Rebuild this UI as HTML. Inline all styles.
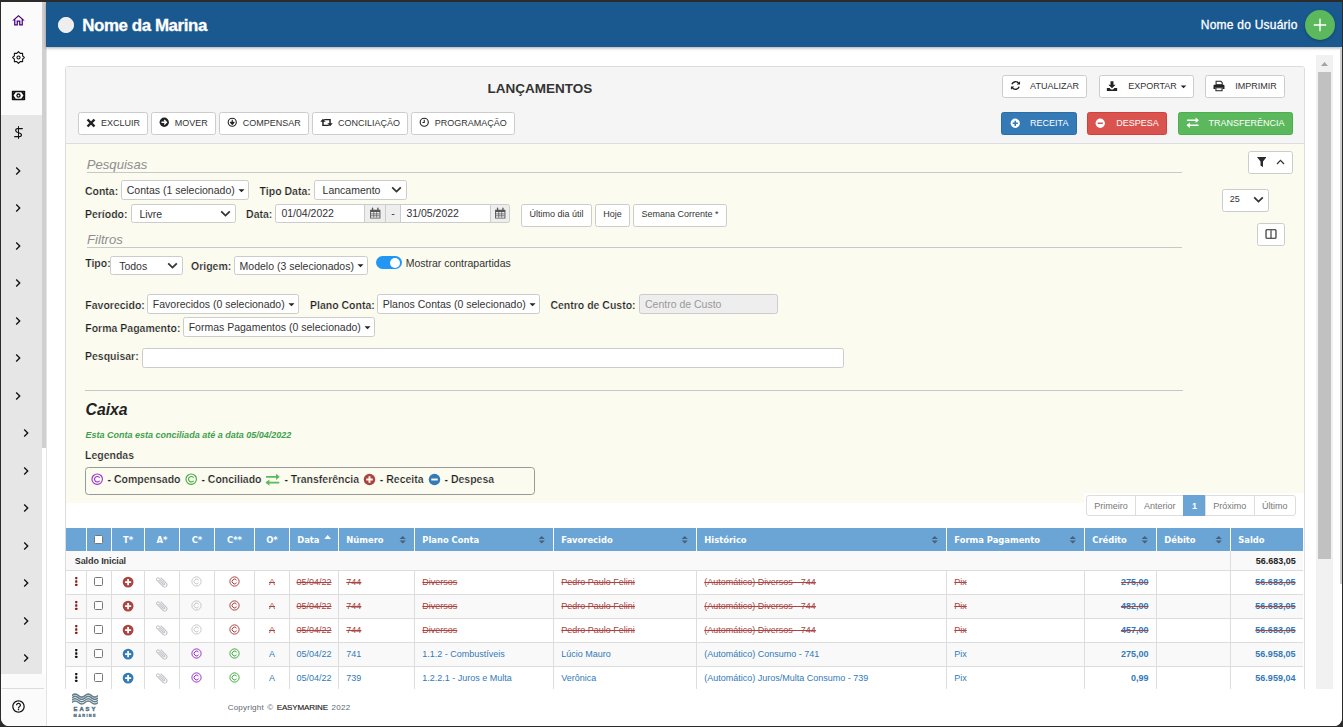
<!DOCTYPE html>
<html lang="pt-BR">
<head>
<meta charset="utf-8">
<title>Lançamentos</title>
<style>
html,body{margin:0;padding:0}
body{width:1343px;height:727px;overflow:hidden;background:#2b2b2b;font-family:"Liberation Sans",Arial,sans-serif;font-size:10.5px;color:#333;position:relative}
.a{position:absolute;box-sizing:border-box}
.t{white-space:nowrap}
.ic{display:block;flex:none}
.win{position:absolute;left:1px;top:2px;width:1341px;height:724px;background:#fff;overflow:hidden;border-radius:0 0 8px 8px}
.pg{position:absolute;left:-1px;top:-2px;width:1343px;height:727px}
b,.b{font-weight:bold}
.btn{display:flex;align-items:center;justify-content:center;border:1px solid #ccc;border-radius:2.5px;background:#fff;color:#333;font-size:9px;white-space:nowrap}
.btn .ic{margin-right:5px}
.btn.w{color:#fff}
.dd{padding-left:1.5px;display:flex;align-items:center;justify-content:center;border:1px solid #ccc;border-radius:2.5px;background:#fff;color:#333;font-size:10.5px;white-space:nowrap}
.sel{display:flex;align-items:center;border:1px solid #ccc;border-radius:2.5px;background:#fff;color:#333;font-size:10.5px;white-space:nowrap}
.inp{border:1px solid #ccc;background:#fff;color:#333;font-size:10.5px;white-space:nowrap;display:flex;align-items:center}
.lab{font-weight:bold;color:#1c1c1c;margin-left:-.6px;-webkit-text-stroke:.22px #fbfbf0}
.sec{font-style:italic;color:#8e8e8e;font-size:13.1px}
.hr{height:1px;background:#c8c8c8}
th,td{padding:0}
</style>
</head>
<body>
<div class="win"><div class="pg">

<!-- sidebar -->
<div class="a " style="left:1px;top:2px;width:45px;height:724px;background:#fbfbfb"></div>
<div class="a " style="left:1px;top:114.5px;width:41px;height:559.1px;background:#e6e6e6"></div>
<div class="a " style="left:42px;top:2px;width:4px;height:446px;background:#d0d0d0"></div>
<div class="a " style="left:42px;top:448px;width:4px;height:226px;background:#fff"></div>
<div class="a " style="left:46px;top:47px;width:1px;height:679px;background:#e4e4e4"></div>
<div class="a " style="left:2px;top:688px;width:42px;height:1px;background:#dcdcdc"></div>
<div class="a " style="left:10.8px;top:13.25px;width:15.0px;height:15.0px;"><svg class="ic" viewBox="0 0 24 24" width="15" height="15" fill="#4b0082"><path d="M12 5.69l5 4.5V18h-2v-6H9v6H7v-7.81l5-4.5M12 3L2 12h3v8h6v-6h2v6h6v-8h3L12 3z"/></svg></div>
<div class="a " style="left:10.95px;top:50.1px;width:15.0px;height:15.0px;"><svg class="ic" viewBox="0 0 24 24" width="15" height="15" fill="#111"><path d="M12.00 2.70L14.74 5.39L18.58 5.42L18.61 9.26L21.30 12.00L18.61 14.74L18.58 18.58L14.74 18.61L12.00 21.30L9.26 18.61L5.42 18.58L5.39 14.74L2.70 12.00L5.39 9.26L5.42 5.42L9.26 5.39z" fill="none" stroke="#111" stroke-width="1.750" stroke-linejoin="round"/><circle cx="12" cy="12" r="2.500" fill="none" stroke="#111" stroke-width="1.700"/></svg></div>
<div class="a " style="left:10.6px;top:88.3px;width:15.0px;height:15.0px;"><svg class="ic" viewBox="0 0 24 24" width="15" height="15" fill="#111"><rect x="1.300" y="4.500" width="21.400" height="15" rx="1.200"/><path d="M4.100 12L7.600 6.700h8.800L19.900 12l-3.500 5.300H7.600z" fill="#fff"/><circle cx="12" cy="12" r="3.500"/><circle cx="12" cy="12" r="1.400" fill="#fff"/><circle cx="4.300" cy="7.300" r=".7" fill="#7a8a9a"/><circle cx="19.700" cy="7.300" r=".7" fill="#7a8a9a"/><circle cx="4.300" cy="16.700" r=".7" fill="#7a8a9a"/><circle cx="19.700" cy="16.700" r=".7" fill="#7a8a9a"/></svg></div>
<div class="a " style="left:10.85px;top:125.1px;width:15.0px;height:15.0px;"><svg class="ic" viewBox="0 0 24 24" width="15" height="15" fill="#111"><path d="M18.800 5.700H10.400C7.300 5.700 6.300 9.700 9.300 11.100L15 13.500c2.900 1.300 1.900 5.100-1.200 5.100H5.200" fill="none" stroke="#111" stroke-width="1.950"/><path d="M12 1.800v20.400" stroke="#111" stroke-width="1.550"/></svg></div>
<div class="a " style="left:10.4px;top:162.55px;width:16.0px;height:16.0px;"><svg class="ic" viewBox="0 0 24 24" width="16" height="16" fill="#111"><path d="M10 6L8.590 7.410 13.170 12l-4.580 4.590L10 18l6-6z"/></svg></div>
<div class="a " style="left:10.4px;top:200.05px;width:16.0px;height:16.0px;"><svg class="ic" viewBox="0 0 24 24" width="16" height="16" fill="#111"><path d="M10 6L8.590 7.410 13.170 12l-4.580 4.590L10 18l6-6z"/></svg></div>
<div class="a " style="left:10.4px;top:237.55px;width:16.0px;height:16.0px;"><svg class="ic" viewBox="0 0 24 24" width="16" height="16" fill="#111"><path d="M10 6L8.590 7.410 13.170 12l-4.580 4.590L10 18l6-6z"/></svg></div>
<div class="a " style="left:10.4px;top:275.05px;width:16.0px;height:16.0px;"><svg class="ic" viewBox="0 0 24 24" width="16" height="16" fill="#111"><path d="M10 6L8.590 7.410 13.170 12l-4.580 4.590L10 18l6-6z"/></svg></div>
<div class="a " style="left:10.4px;top:312.55px;width:16.0px;height:16.0px;"><svg class="ic" viewBox="0 0 24 24" width="16" height="16" fill="#111"><path d="M10 6L8.590 7.410 13.170 12l-4.580 4.590L10 18l6-6z"/></svg></div>
<div class="a " style="left:10.4px;top:350.05px;width:16.0px;height:16.0px;"><svg class="ic" viewBox="0 0 24 24" width="16" height="16" fill="#111"><path d="M10 6L8.590 7.410 13.170 12l-4.580 4.590L10 18l6-6z"/></svg></div>
<div class="a " style="left:10.4px;top:387.55px;width:16.0px;height:16.0px;"><svg class="ic" viewBox="0 0 24 24" width="16" height="16" fill="#111"><path d="M10 6L8.590 7.410 13.170 12l-4.580 4.590L10 18l6-6z"/></svg></div>
<div class="a " style="left:17.9px;top:425.05px;width:16.0px;height:16.0px;"><svg class="ic" viewBox="0 0 24 24" width="16" height="16" fill="#111"><path d="M10 6L8.590 7.410 13.170 12l-4.580 4.590L10 18l6-6z"/></svg></div>
<div class="a " style="left:17.9px;top:462.55px;width:16.0px;height:16.0px;"><svg class="ic" viewBox="0 0 24 24" width="16" height="16" fill="#111"><path d="M10 6L8.590 7.410 13.170 12l-4.580 4.590L10 18l6-6z"/></svg></div>
<div class="a " style="left:17.9px;top:500.05px;width:16.0px;height:16.0px;"><svg class="ic" viewBox="0 0 24 24" width="16" height="16" fill="#111"><path d="M10 6L8.590 7.410 13.170 12l-4.580 4.590L10 18l6-6z"/></svg></div>
<div class="a " style="left:17.9px;top:537.55px;width:16.0px;height:16.0px;"><svg class="ic" viewBox="0 0 24 24" width="16" height="16" fill="#111"><path d="M10 6L8.590 7.410 13.170 12l-4.580 4.590L10 18l6-6z"/></svg></div>
<div class="a " style="left:17.9px;top:575.05px;width:16.0px;height:16.0px;"><svg class="ic" viewBox="0 0 24 24" width="16" height="16" fill="#111"><path d="M10 6L8.590 7.410 13.170 12l-4.580 4.590L10 18l6-6z"/></svg></div>
<div class="a " style="left:17.9px;top:612.55px;width:16.0px;height:16.0px;"><svg class="ic" viewBox="0 0 24 24" width="16" height="16" fill="#111"><path d="M10 6L8.590 7.410 13.170 12l-4.580 4.590L10 18l6-6z"/></svg></div>
<div class="a " style="left:17.9px;top:650.05px;width:16.0px;height:16.0px;"><svg class="ic" viewBox="0 0 24 24" width="16" height="16" fill="#111"><path d="M10 6L8.590 7.410 13.170 12l-4.580 4.590L10 18l6-6z"/></svg></div>
<div class="a " style="left:10.5px;top:699.0px;width:15.0px;height:15.0px;"><svg class="ic" viewBox="0 0 24 24" width="15" height="15" fill="#111"><path d="M11 18h2v-2h-2v2zm1-16C6.480 2 2 6.480 2 12s4.480 10 10 10 10-4.480 10-10S17.520 2 12 2zm0 18c-4.410 0-8-3.590-8-8s3.590-8 8-8 8 3.590 8 8-3.590 8-8 8zm0-14c-2.210 0-4 1.790-4 4h2c0-1.100.9-2 2-2s2 .9 2 2c0 2-3 1.750-3 5h2c0-2.250 3-2.500 3-5 0-2.210-1.790-4-4-4z"/></svg></div>
<!-- top bar -->
<div class="a " style="left:46px;top:2px;width:1296px;height:45px;background:#1a5990;box-shadow:0 1px 3px rgba(0,0,0,.35)"></div>
<div class="a " style="left:58.2px;top:17px;width:15.6px;height:15.6px;background:#eee;border:1.500px solid #fff;border-radius:50%"></div>
<div class="a t b" style="left:82.3px;top:15.7px;line-height:20px;color:#fff;font-size:16.9px;letter-spacing:-.42px;-webkit-text-stroke:.3px #fff">Nome da Marina</div>
<div class="a t " style="left:1200.8px;top:16.6px;line-height:16px;color:#fff;font-size:12px;letter-spacing:.23px;-webkit-text-stroke:.3px #fff">Nome do Usuário</div>
<div class="a " style="left:1305px;top:10px;width:30px;height:30px;background:#5cb85c;border-radius:50%;box-shadow:0 1px 3px rgba(0,0,0,.3)"><svg class="ic" viewBox="0 0 30 30" width="30" height="30"><path d="M15 8.800v12.400M8.800 15h12.400" stroke="#fff" stroke-width="1.400"/></svg></div>
<!-- scrollbars -->
<div class="a " style="left:1316px;top:55px;width:17px;height:634px;background:#f1f1f1"></div>
<div class="a " style="left:1318px;top:72px;width:13px;height:487px;background:#c1c1c1"></div>
<div class="a " style="left:1316px;top:55px;width:17px;height:17px;"><svg class="ic" viewBox="0 0 17 17" width="17" height="17"><path d="M5 11l3.500-4 3.500 4z" fill="#a3a3a3"/></svg></div>
<div class="a " style="left:1340px;top:47px;width:2px;height:537px;background:#cfcfcf"></div>
<!-- panel -->
<div class="a " style="left:65px;top:66px;width:1240px;height:694px;border:1px solid #ddd;border-radius:3px;background:#fff"></div>
<div class="a " style="left:66px;top:67px;width:1238px;height:76px;background:#f5f5f5;border-radius:2px 2px 0 0"></div>
<div class="a " style="left:66px;top:143px;width:1238px;height:1px;background:#ddd"></div>
<div class="a " style="left:66px;top:144px;width:1238px;height:358.5px;background:#fbfbf0"></div>
<div class="a " style="left:1084px;top:492.5px;width:220px;height:10.5px;background:#fff"></div>
<div class="a t b" style="left:487.5px;top:79.7px;line-height:18px;font-size:13.5px;color:#333">LANÇAMENTOS</div>
<div class="a btn " style="left:78px;top:112px;width:70px;height:23px;padding-bottom:2px;"><svg class="ic" viewBox="0 0 14 14" width="10" height="10"><path d="M3.300 3.300L10.700 10.700M10.700 3.300L3.300 10.700" stroke="#222" stroke-width="3.300" stroke-linecap="square" fill="none"/></svg><span>EXCLUIR</span></div>
<div class="a btn " style="left:151px;top:112px;width:65px;height:23px;padding-bottom:2px;"><svg class="ic" viewBox="0 0 14 14" width="10.5" height="10.5"><circle cx="7" cy="7" r="6.200" fill="#222"/><path d="M3.300 7h6.200M6.900 3.900L10 7 6.900 10.100" stroke="#fff" stroke-width="1.700" fill="none" stroke-linejoin="miter"/></svg><span>MOVER</span></div>
<div class="a btn " style="left:219px;top:112px;width:90px;height:23px;padding-bottom:2px;"><svg class="ic" viewBox="0 0 14 14" width="10.5" height="10.5"><circle cx="7" cy="7" r="5.400" fill="none" stroke="#222" stroke-width="1.500"/><path d="M7 3.800v4.400M4.600 7.200L7 9.900 9.400 7.200z" stroke="#222" stroke-width="1.500" fill="#222" stroke-linejoin="round"/></svg><span>COMPENSAR</span></div>
<div class="a btn " style="left:312px;top:112px;width:96px;height:23px;padding-bottom:2px;"><svg class="ic" viewBox="0 0 14 14" width="13" height="13"><g transform="translate(.5 2.900)"><path d="M2.700 0L5.600 3.300H3.500V6.500H8.300L9.600 8H1.900V3.300H-.2z" fill="#222"/><path d="M10.300 8.200L7.400 4.900H9.500V1.700H4.700L3.400 .2H11.100V4.900H13.200z" fill="#222"/></g></svg><span>CONCILIAÇÃO</span></div>
<div class="a btn " style="left:411px;top:112px;width:104px;height:23px;padding-bottom:2px;"><svg class="ic" viewBox="0 0 14 14" width="10.5" height="10.5"><circle cx="7" cy="7" r="5.400" fill="none" stroke="#222" stroke-width="1.500"/><path d="M7 3.800V7.400H4.600" stroke="#222" stroke-width="1.400" fill="none"/></svg><span>PROGRAMAÇÃO</span></div>
<div class="a btn " style="left:1002px;top:75px;width:85px;height:23px;padding-bottom:1.5px;"><svg class="ic" style="margin-right:9px" viewBox="0 0 14 14" width="11" height="11"><path d="M11.600 8.600A4.900 4.900 0 0 1 2.900 9.700M2.400 5.400A4.900 4.900 0 0 1 11.100 4.300" stroke="#222" stroke-width="1.800" fill="none"/><path d="M12.800 1.600v4.200H8.600zM1.200 12.400V8.200h4.200z" fill="#222"/></svg><span>ATUALIZAR</span></div>
<div class="a btn " style="left:1099px;top:75px;width:95px;height:23px;padding-bottom:1.5px;"><svg class="ic" style="margin-right:10.5px" viewBox="0 0 14 14" width="12" height="12"><path d="M5.300 1.500h3.400v4h2.500L7 9.700 2.800 5.500h2.500z" fill="#222"/><path d="M1 9.400h3.200l1.600 1.600h2.400l1.600-1.600H13v3.400H1z" fill="#222"/></svg><span>EXPORTAR <svg class="ic" style="display:inline-block;margin:0 0 0 1px;vertical-align:-1px" viewBox="0 0 8 8" width="7" height="7"><path d="M.8 2.800h6.400L4 6z" fill="#222"/></svg></span></div>
<div class="a btn " style="left:1205px;top:75px;width:80px;height:23px;padding-bottom:1.5px;"><svg class="ic" style="margin-right:10px" viewBox="0 0 14 14" width="12" height="12"><path d="M3.600 1.500h5.600l1.600 1.600v2.400H3.600z" fill="none" stroke="#222" stroke-width="1.200"/><path d="M1.600 5.600h10.800a1 1 0 0 1 1 1v4h-2.200V8.400H2.800v2.200H.6v-4a1 1 0 0 1 1-1z" fill="#222"/><path d="M3.400 9h7.200v3.600H3.400z" fill="none" stroke="#222" stroke-width="1.200"/></svg><span>IMPRIMIR</span></div>
<div class="a btn w" style="left:1001px;top:112px;width:76px;height:23px;padding-bottom:0.6px;background:#337ab7;border-color:#2e6da4"><svg class="ic" style="margin-right:10px" viewBox="0 0 14 14" width="10.5" height="10.5"><circle cx="7" cy="7" r="6.200" fill="#fff"/><path d="M7 3.500v7M3.500 7h7" stroke="#337ab7" stroke-width="2.100" fill="none"/></svg><span>RECEITA</span></div>
<div class="a btn w" style="left:1087px;top:112px;width:80px;height:23px;padding-bottom:0.6px;background:#d9534f;border-color:#d43f3a"><svg class="ic" style="margin-right:10.5px" viewBox="0 0 14 14" width="10.5" height="10.5"><circle cx="7" cy="7" r="6.200" fill="#fff"/><path d="M3.500 7h7" stroke="#d9534f" stroke-width="2.100" fill="none"/></svg><span>DESPESA</span></div>
<div class="a btn w" style="left:1178px;top:112px;width:115px;height:23px;padding-bottom:0.6px;background:#5cb85c;border-color:#4cae4c"><svg class="ic" style="margin-right:8.5px" viewBox="0 0 14 14" width="13.5" height="13.5"><path d="M1 4.400h9.600M1 9.600h12M3.400 9.600" stroke="#fff" stroke-width="1.600" fill="none"/><path d="M10 1.600l3.400 2.800L10 7.200zM4 6.800L.6 9.600 4 12.400z" fill="#fff"/></svg><span>TRANSFERÊNCIA</span></div>
<!-- filters -->
<div class="a t sec" style="left:86.8px;top:156.8px;line-height:16px;">Pesquisas</div>
<div class="a hr" style="left:87px;top:172px;width:1095px;height:1px;"></div>
<div class="a t sec" style="left:87.1px;top:232.0px;line-height:16px;">Filtros</div>
<div class="a hr" style="left:87px;top:247px;width:1095px;height:1px;"></div>
<div class="a t lab" style="left:85.5px;top:183.6px;line-height:14px;">Conta:</div>
<div class="a dd" style="left:121px;top:180px;width:128px;height:20px;"><span>Contas (1 selecionado)</span><svg class="ic" style="margin-left:3px" viewBox="0 0 8 8" width="7" height="7"><path d="M.6 2.600h6.800L4 6z" fill="#222"/></svg></div>
<div class="a t lab" style="left:260.2px;top:183.6px;line-height:14px;">Tipo Data:</div>
<div class="a sel" style="left:314px;top:180px;width:93px;height:20px;padding:0 3.6px 0px 7.6px;font-size:10.5px"><span style="flex:1">Lancamento</span><svg class="ic" viewBox="0 0 12 8" width="11" height="7.500"><path d="M1.300 1.300L6 6l4.700-4.700" stroke="#333" stroke-width="1.900" fill="none"/></svg></div>
<div class="a t lab" style="left:85.5px;top:206.8px;line-height:14px;">Período:</div>
<div class="a sel" style="left:131px;top:204px;width:105px;height:19px;padding:0 4.4px 0px 7.4px;font-size:10.5px"><span style="flex:1">Livre</span><svg class="ic" viewBox="0 0 12 8" width="11" height="7.500"><path d="M1.300 1.300L6 6l4.700-4.700" stroke="#333" stroke-width="1.900" fill="none"/></svg></div>
<div class="a t lab" style="left:246.7px;top:206.8px;line-height:14px;">Data:</div>
<div class="a inp" style="left:275px;top:204px;width:90px;height:19px;border-radius:2.5px 0 0 2.5px;padding-left:5.400px"><span style="margin-top:-2px">01/04/2022</span></div>
<div class="a inp" style="left:364px;top:204px;width:22px;height:19px;background:#eee;justify-content:center"><svg class="ic" style="margin-top:-1px" viewBox="0 0 14 14" width="12.5" height="12.5"><path d="M1.200 3h11.600v10H1.200z" fill="#555"/><path d="M2.300 5.600h9.400v6.300H2.300z" fill="#eee"/><path d="M5.300 5.600v6.300M8.600 5.600v6.300M2.300 7.700h9.400M2.300 9.800h9.400" stroke="#555" stroke-width=".8"/><path d="M4 1.200v2.600M10 1.200v2.600" stroke="#555" stroke-width="1.500" stroke-linecap="round"/></svg></div>
<div class="a inp" style="left:385px;top:204px;width:16px;height:19px;background:#eee;justify-content:center"><span style="margin-top:-2px">-</span></div>
<div class="a inp" style="left:400px;top:204px;width:91px;height:19px;padding-left:5.400px"><span style="margin-top:-2px">31/05/2022</span></div>
<div class="a inp" style="left:490px;top:204px;width:20px;height:19px;background:#eee;justify-content:center;border-radius:0 2.5px 2.5px 0"><svg class="ic" style="margin-top:-1px" viewBox="0 0 14 14" width="12.5" height="12.5"><path d="M1.200 3h11.600v10H1.200z" fill="#555"/><path d="M2.300 5.600h9.400v6.300H2.300z" fill="#eee"/><path d="M5.300 5.600v6.300M8.600 5.600v6.300M2.300 7.700h9.400M2.300 9.800h9.400" stroke="#555" stroke-width=".8"/><path d="M4 1.200v2.600M10 1.200v2.600" stroke="#555" stroke-width="1.500" stroke-linecap="round"/></svg></div>
<div class="a btn " style="left:521px;top:204px;width:71px;height:23px;padding-bottom:3px;"><span>Último dia útil</span></div>
<div class="a btn " style="left:595px;top:204px;width:35px;height:23px;padding-bottom:3px;"><span>Hoje</span></div>
<div class="a btn " style="left:633px;top:204px;width:94px;height:23px;padding-bottom:3px;"><span>Semana Corrente *</span></div>
<div class="a btn" style="left:1248px;top:151px;width:45px;height:23px;"></div>
<div class="a " style="left:1256.8px;top:156.9px;width:9.5px;height:10.1px;"><svg class="ic" viewBox="0 0 9.500 10.100" width="9.500" height="10.100"><path d="M0 0H9.500L6 4.600V10.100L3.500 8.400V4.600z" fill="#2b2b2b"/></svg></div>
<div class="a " style="left:1276px;top:159.2px;width:9px;height:6.0px;"><svg class="ic" viewBox="0 0 9 6" width="9" height="6"><path d="M1 5L4.500 1.400 8 5" stroke="#333" stroke-width="1.250" fill="none"/></svg></div>
<div class="a sel" style="left:1222px;top:189px;width:47px;height:23px;padding:0 4px 2.4px 6.8px;font-size:9px"><span style="flex:1">25</span><svg class="ic" viewBox="0 0 12 8" width="11" height="7.500"><path d="M1.300 1.300L6 6l4.700-4.700" stroke="#333" stroke-width="1.900" fill="none"/></svg></div>
<div class="a btn" style="left:1257px;top:223px;width:28px;height:23px;padding-bottom:2px"><svg class="ic" style="margin:0" viewBox="0 0 14 14" width="12" height="12"><rect x="1.200" y="2" width="11.600" height="10" rx="1" fill="none" stroke="#222" stroke-width="1.300"/><path d="M7 2.600v9" stroke="#222" stroke-width="1.200"/></svg></div>
<div class="a t lab" style="left:85.8px;top:255.8px;line-height:14px;">Tipo:</div>
<div class="a sel" style="left:110px;top:256px;width:73px;height:19px;padding:0 3.8px 0px 8.2px;font-size:10.5px"><span style="flex:1">Todos</span><svg class="ic" viewBox="0 0 12 8" width="11" height="7.500"><path d="M1.300 1.300L6 6l4.700-4.700" stroke="#333" stroke-width="1.900" fill="none"/></svg></div>
<div class="a t lab" style="left:191.6px;top:259.3px;line-height:14px;">Origem:</div>
<div class="a dd" style="left:234px;top:256px;width:134px;height:19px;"><span>Modelo (3 selecionados)</span><svg class="ic" style="margin-left:3px" viewBox="0 0 8 8" width="7" height="7"><path d="M.6 2.600h6.800L4 6z" fill="#222"/></svg></div>
<div class="a " style="left:375.9px;top:256.3px;width:26.0px;height:12.5px;background:#2196f3;border-radius:7px"><div class="a" style="right:1.500px;top:1.250px;width:10px;height:10px;border-radius:50%;background:#fff"></div></div>
<div class="a t " style="left:405.7px;top:256.2px;line-height:14px;color:#333">Mostrar contrapartidas</div>
<div class="a t lab" style="left:85.9px;top:298.2px;line-height:14px;">Favorecido:</div>
<div class="a dd" style="left:147px;top:294px;width:152px;height:20px;"><span>Favorecidos (0 selecionado)</span><svg class="ic" style="margin-left:3px" viewBox="0 0 8 8" width="7" height="7"><path d="M.6 2.600h6.800L4 6z" fill="#222"/></svg></div>
<div class="a t lab" style="left:310.6px;top:298.2px;line-height:14px;">Plano Conta:</div>
<div class="a dd" style="left:377px;top:294px;width:163px;height:20px;"><span>Planos Contas (0 selecionado)</span><svg class="ic" style="margin-left:3px" viewBox="0 0 8 8" width="7" height="7"><path d="M.6 2.600h6.800L4 6z" fill="#222"/></svg></div>
<div class="a t lab" style="left:551px;top:298.2px;line-height:14px;">Centro de Custo:</div>
<div class="a inp" style="left:639px;top:294px;width:139px;height:20px;background:#eee;color:#999;border-radius:2.5px;padding-left:5px">Centro de Custo</div>
<div class="a t lab" style="left:85.9px;top:321.0px;line-height:14px;">Forma Pagamento:</div>
<div class="a dd" style="left:183px;top:317px;width:192px;height:20px;"><span>Formas Pagamentos (0 selecionado)</span><svg class="ic" style="margin-left:3px" viewBox="0 0 8 8" width="7" height="7"><path d="M.6 2.600h6.800L4 6z" fill="#222"/></svg></div>
<div class="a t lab" style="left:85.6px;top:349.2px;line-height:14px;">Pesquisar:</div>
<div class="a inp" style="left:142px;top:348px;width:702px;height:20px;border-radius:2.5px"></div>
<div class="a hr" style="left:85.4px;top:390px;width:1097.6px;height:1px;"></div>
<div class="a t b" style="left:85.6px;top:399.6px;line-height:20px;font-style:italic;font-size:15.75px;color:#222">Caixa</div>
<div class="a t b" style="left:85.6px;top:428.8px;line-height:12px;font-style:italic;font-size:9px;color:#3fa14c">Esta Conta esta conciliada até a data 05/04/2022</div>
<div class="a t lab" style="left:85.6px;top:448.0px;line-height:14px;">Legendas</div>
<div class="a " style="left:85px;top:467px;width:450px;height:28px;border:1px solid #999;border-radius:3.5px"></div>
<div class="a " style="left:90.9px;top:473.0px;width:12.4px;height:12.4px;"><svg class="ic" viewBox="0 0 14 14" width="12.4" height="12.4"><circle cx="7" cy="7" r="5.900" fill="none" stroke="#9932cc" stroke-width="1.250"/><path d="M9.700 8.700a3.100 3.100 0 1 1 0-3.400" fill="none" stroke="#9932cc" stroke-width="1.250"/></svg></div>
<div class="a t lab" style="left:108.2px;top:472.4px;line-height:14px;">- Compensado</div>
<div class="a " style="left:184.8px;top:473.0px;width:12.4px;height:12.4px;"><svg class="ic" viewBox="0 0 14 14" width="12.4" height="12.4"><circle cx="7" cy="7" r="5.900" fill="none" stroke="#3fab3f" stroke-width="1.250"/><path d="M9.700 8.700a3.100 3.100 0 1 1 0-3.400" fill="none" stroke="#3fab3f" stroke-width="1.250"/></svg></div>
<div class="a t lab" style="left:202px;top:472.4px;line-height:14px;">- Conciliado</div>
<div class="a " style="left:265.2px;top:471.5px;width:15.4px;height:15.4px;"><svg class="ic" viewBox="0 0 14 14" width="15.4" height="15.4"><path d="M1 4.400h9.600M1 9.600h12M3.400 9.600" stroke="#5cb85c" stroke-width="1.600" fill="none"/><path d="M10 1.600l3.400 2.800L10 7.200zM4 6.800L.6 9.600 4 12.400z" fill="#5cb85c"/></svg></div>
<div class="a t lab" style="left:285px;top:472.4px;line-height:14px;">- Transferência</div>
<div class="a " style="left:362.9px;top:472.7px;width:13.0px;height:13.0px;"><svg class="ic" viewBox="0 0 14 14" width="13.0" height="13.0"><circle cx="7" cy="7" r="6.200" fill="#a94442"/><path d="M7 3.500v7M3.500 7h7" stroke="#fbfbf0" stroke-width="2.100" fill="none"/></svg></div>
<div class="a t lab" style="left:380.4px;top:472.4px;line-height:14px;">- Receita</div>
<div class="a " style="left:427.6px;top:472.7px;width:13.0px;height:13.0px;"><svg class="ic" viewBox="0 0 14 14" width="13.0" height="13.0"><circle cx="7" cy="7" r="6.200" fill="#337ab7"/><path d="M3.500 7h7" stroke="#fbfbf0" stroke-width="2.100" fill="none"/></svg></div>
<div class="a t lab" style="left:445.1px;top:472.4px;line-height:14px;">- Despesa</div>
<!-- pagination -->
<div class="a " style="left:1086px;top:495px;width:50.2px;height:21px;display:flex;align-items:center;justify-content:center;font-size:9px;background:#fff;color:#777;border:1px solid #ddd;border-radius:3px 0 0 3px;">Primeiro</div>
<div class="a " style="left:1135.2px;top:495px;width:49.0px;height:21px;display:flex;align-items:center;justify-content:center;font-size:9px;background:#fff;color:#777;border:1px solid #ddd;">Anterior</div>
<div class="a " style="left:1183.2px;top:495px;width:22.6px;height:21px;display:flex;align-items:center;justify-content:center;font-size:9px;background:#6aa5d6;color:#fff;font-weight:bold;border:1px solid #6aa5d6;">1</div>
<div class="a " style="left:1204.8px;top:495px;width:49.8px;height:21px;display:flex;align-items:center;justify-content:center;font-size:9px;background:#fff;color:#777;border:1px solid #ddd;">Próximo</div>
<div class="a " style="left:1253.6px;top:495px;width:42.4px;height:21px;display:flex;align-items:center;justify-content:center;font-size:9px;background:#fff;color:#777;border:1px solid #ddd;border-radius:0 3px 3px 0;">Último</div>
<!-- table -->
<div class="a " style="left:66px;top:528px;width:1237.4px;height:23px;background:#6aa5d6"></div>
<div class="a " style="left:86px;top:528px;width:1px;height:23px;background:#fff"></div>
<div class="a " style="left:111px;top:528px;width:1px;height:23px;background:#fff"></div>
<div class="a " style="left:144px;top:528px;width:1px;height:23px;background:#fff"></div>
<div class="a " style="left:179px;top:528px;width:1px;height:23px;background:#fff"></div>
<div class="a " style="left:214px;top:528px;width:1px;height:23px;background:#fff"></div>
<div class="a " style="left:254px;top:528px;width:1px;height:23px;background:#fff"></div>
<div class="a " style="left:289px;top:528px;width:1px;height:23px;background:#fff"></div>
<div class="a " style="left:338px;top:528px;width:1px;height:23px;background:#fff"></div>
<div class="a " style="left:414px;top:528px;width:1px;height:23px;background:#fff"></div>
<div class="a " style="left:553px;top:528px;width:1px;height:23px;background:#fff"></div>
<div class="a " style="left:696px;top:528px;width:1px;height:23px;background:#fff"></div>
<div class="a " style="left:946px;top:528px;width:1px;height:23px;background:#fff"></div>
<div class="a " style="left:1084px;top:528px;width:1px;height:23px;background:#fff"></div>
<div class="a " style="left:1156px;top:528px;width:1px;height:23px;background:#fff"></div>
<div class="a " style="left:1230px;top:528px;width:1px;height:23px;background:#fff"></div>
<div class="a " style="left:94px;top:534.5px;width:9px;height:9.0px;background:#fff;border:1px solid #767676;border-radius:1.500px"></div>
<div class="a t b" style="left:112px;width:32px;top:533px;line-height:14px;text-align:center;color:#fff;font-family:'DejaVu Sans Condensed','Liberation Sans',sans-serif;font-size:9.3px">T*</div>
<div class="a t b" style="left:145px;width:34px;top:533px;line-height:14px;text-align:center;color:#fff;font-family:'DejaVu Sans Condensed','Liberation Sans',sans-serif;font-size:9.3px">A*</div>
<div class="a t b" style="left:180px;width:34px;top:533px;line-height:14px;text-align:center;color:#fff;font-family:'DejaVu Sans Condensed','Liberation Sans',sans-serif;font-size:9.3px">C*</div>
<div class="a t b" style="left:215px;width:39px;top:533px;line-height:14px;text-align:center;color:#fff;font-family:'DejaVu Sans Condensed','Liberation Sans',sans-serif;font-size:9.3px">C**</div>
<div class="a t b" style="left:255px;width:34px;top:533px;line-height:14px;text-align:center;color:#fff;font-family:'DejaVu Sans Condensed','Liberation Sans',sans-serif;font-size:9.3px">O*</div>
<div class="a t b" style="left:297.2px;top:533.0px;line-height:14px;color:#fff;font-family:'DejaVu Sans Condensed','Liberation Sans',sans-serif;font-size:9.3px">Data</div>
<div class="a " style="left:324px;top:534.8px;width:7.4px;height:4.4px;"><svg class="ic" viewBox="0 0 7.4 4.4" width="7.400" height="4.400"><path d="M0 4.400L3.700 0l3.700 4.400z" fill="#fff"/></svg></div>
<div class="a t b" style="left:346.3px;top:533.0px;line-height:14px;color:#fff;font-family:'DejaVu Sans Condensed','Liberation Sans',sans-serif;font-size:9.3px">Número</div>
<div class="a " style="left:397.3px;top:533.65px;width:11.5px;height:11.5px;"><svg class="ic" viewBox="0 0 14 14" width="11.5" height="11.5"><path d="M3.200 6.100L7 2.400l3.800 3.700zM3.200 7.900L7 11.600l3.800-3.700z" fill="#486078"/></svg></div>
<div class="a t b" style="left:422.3px;top:533.0px;line-height:14px;color:#fff;font-family:'DejaVu Sans Condensed','Liberation Sans',sans-serif;font-size:9.3px">Plano Conta</div>
<div class="a " style="left:536.3px;top:533.65px;width:11.5px;height:11.5px;"><svg class="ic" viewBox="0 0 14 14" width="11.5" height="11.5"><path d="M3.200 6.100L7 2.400l3.800 3.700zM3.200 7.900L7 11.600l3.800-3.700z" fill="#486078"/></svg></div>
<div class="a t b" style="left:561.3px;top:533.0px;line-height:14px;color:#fff;font-family:'DejaVu Sans Condensed','Liberation Sans',sans-serif;font-size:9.3px">Favorecido</div>
<div class="a " style="left:679.3px;top:533.65px;width:11.5px;height:11.5px;"><svg class="ic" viewBox="0 0 14 14" width="11.5" height="11.5"><path d="M3.200 6.100L7 2.400l3.800 3.700zM3.200 7.900L7 11.600l3.800-3.700z" fill="#486078"/></svg></div>
<div class="a t b" style="left:704.3px;top:533.0px;line-height:14px;color:#fff;font-family:'DejaVu Sans Condensed','Liberation Sans',sans-serif;font-size:9.3px">Histórico</div>
<div class="a " style="left:929.3px;top:533.65px;width:11.5px;height:11.5px;"><svg class="ic" viewBox="0 0 14 14" width="11.5" height="11.5"><path d="M3.200 6.100L7 2.400l3.800 3.700zM3.200 7.900L7 11.600l3.800-3.700z" fill="#486078"/></svg></div>
<div class="a t b" style="left:954.3px;top:533.0px;line-height:14px;color:#fff;font-family:'DejaVu Sans Condensed','Liberation Sans',sans-serif;font-size:9.3px">Forma Pagamento</div>
<div class="a " style="left:1067.3px;top:533.65px;width:11.5px;height:11.5px;"><svg class="ic" viewBox="0 0 14 14" width="11.5" height="11.5"><path d="M3.200 6.100L7 2.400l3.800 3.700zM3.200 7.900L7 11.600l3.800-3.700z" fill="#486078"/></svg></div>
<div class="a t b" style="left:1092.3px;top:533.0px;line-height:14px;color:#fff;font-family:'DejaVu Sans Condensed','Liberation Sans',sans-serif;font-size:9.3px">Crédito</div>
<div class="a " style="left:1139.3px;top:533.65px;width:11.5px;height:11.5px;"><svg class="ic" viewBox="0 0 14 14" width="11.5" height="11.5"><path d="M3.200 6.100L7 2.400l3.800 3.700zM3.200 7.900L7 11.600l3.800-3.700z" fill="#486078"/></svg></div>
<div class="a t b" style="left:1164.3px;top:533.0px;line-height:14px;color:#fff;font-family:'DejaVu Sans Condensed','Liberation Sans',sans-serif;font-size:9.3px">Débito</div>
<div class="a " style="left:1213.3px;top:533.65px;width:11.5px;height:11.5px;"><svg class="ic" viewBox="0 0 14 14" width="11.5" height="11.5"><path d="M3.200 6.100L7 2.400l3.800 3.700zM3.200 7.900L7 11.600l3.800-3.700z" fill="#486078"/></svg></div>
<div class="a t b" style="left:1238.3px;top:533.0px;line-height:14px;color:#fff;font-family:'DejaVu Sans Condensed','Liberation Sans',sans-serif;font-size:9.3px">Saldo</div>
<div class="a " style="left:66px;top:551px;width:1237.4px;height:20px;background:#f9f9f9;border-bottom:1px solid #ddd"></div>
<div class="a t b" style="left:74.8px;top:554.8px;line-height:12px;font-size:9px;color:#111;letter-spacing:-.1px;-webkit-text-stroke:.12px #f9f9f9">Saldo Inicial</div>
<div class="a t b" style="left:0px;top:554.8px;line-height:12px;font-size:9px;color:#222;left:auto;right:47.3px">56.683,05</div>
<div class="a " style="left:1230px;top:551px;width:1px;height:19px;background:#ddd"></div>
<div class="a " style="left:66px;top:571px;width:1237.4px;height:24px;background:#fff;border-bottom:1px solid #ddd"></div>
<div class="a " style="left:86px;top:571px;width:1px;height:24px;background:#ddd"></div>
<div class="a " style="left:111px;top:571px;width:1px;height:24px;background:#ddd"></div>
<div class="a " style="left:144px;top:571px;width:1px;height:24px;background:#ddd"></div>
<div class="a " style="left:179px;top:571px;width:1px;height:24px;background:#ddd"></div>
<div class="a " style="left:214px;top:571px;width:1px;height:24px;background:#ddd"></div>
<div class="a " style="left:254px;top:571px;width:1px;height:24px;background:#ddd"></div>
<div class="a " style="left:289px;top:571px;width:1px;height:24px;background:#ddd"></div>
<div class="a " style="left:338px;top:571px;width:1px;height:24px;background:#ddd"></div>
<div class="a " style="left:414px;top:571px;width:1px;height:24px;background:#ddd"></div>
<div class="a " style="left:553px;top:571px;width:1px;height:24px;background:#ddd"></div>
<div class="a " style="left:696px;top:571px;width:1px;height:24px;background:#ddd"></div>
<div class="a " style="left:946px;top:571px;width:1px;height:24px;background:#ddd"></div>
<div class="a " style="left:1084px;top:571px;width:1px;height:24px;background:#ddd"></div>
<div class="a " style="left:1156px;top:571px;width:1px;height:24px;background:#ddd"></div>
<div class="a " style="left:1230px;top:571px;width:1px;height:24px;background:#ddd"></div>
<div class="a " style="left:70.8px;top:576.1px;width:11.0px;height:11.0px;"><svg class="ic" viewBox="0 0 14 14" width="11" height="11"><rect x="5.300" y="1.200" width="2.800" height="2.900" rx=".5" fill="#8b1a1a"/><rect x="5.300" y="5.550" width="2.800" height="2.900" rx=".5" fill="#8b1a1a"/><rect x="5.300" y="9.900" width="2.800" height="2.900" rx=".5" fill="#8b1a1a"/></svg></div>
<div class="a " style="left:94px;top:577.0px;width:9px;height:9.0px;background:#fff;border:1px solid #767676;border-radius:1.500px"></div>
<div class="a " style="left:122.4px;top:575.5px;width:12.2px;height:12.2px;"><svg class="ic" viewBox="0 0 14 14" width="12.2" height="12.2"><circle cx="7" cy="7" r="6.200" fill="#a94442"/><path d="M7 3.500v7M3.500 7h7" stroke="#fff" stroke-width="2.100" fill="none"/></svg></div>
<div class="a " style="left:155.2px;top:574.6px;width:14.0px;height:14.0px;"><svg class="ic" viewBox="0 0 14 14" width="14" height="14"><g transform="translate(6.800 7) rotate(-45)"><path d="M2.300 -3.400V4a2.300 2.300 0 0 1-4.600 0V-4.500a1.550 1.550 0 0 1 3.100 0V3.100a.78.78 0 0 1-1.560 0V-3.400" stroke="#c2c2ca" stroke-width="1.050" fill="none" stroke-linecap="round"/></g></svg></div>
<div class="a " style="left:191.4px;top:575.7px;width:11.0px;height:11.0px;"><svg class="ic" viewBox="0 0 14 14" width="11" height="11"><circle cx="7" cy="7" r="5.900" fill="none" stroke="#c8c8c8" stroke-width="1.250"/><path d="M9.700 8.700a3.100 3.100 0 1 1 0-3.400" fill="none" stroke="#c8c8c8" stroke-width="1.250"/></svg></div>
<div class="a " style="left:228.6px;top:575.7px;width:11.0px;height:11.0px;"><svg class="ic" viewBox="0 0 14 14" width="11" height="11"><circle cx="7" cy="7" r="5.900" fill="none" stroke="#a94442" stroke-width="1.250"/><path d="M9.700 8.700a3.100 3.100 0 1 1 0-3.400" fill="none" stroke="#a94442" stroke-width="1.250"/></svg></div>
<div class="a t" style="left:255px;width:34px;top:575.6px;line-height:12px;text-align:center;font-size:9px;color:#a94442;text-decoration:line-through;">A</div>
<div class="a t " style="left:296.5px;top:575.6px;line-height:12px;font-size:9px;color:#a94442;text-decoration:line-through;">05/04/22</div>
<div class="a t " style="left:346.3px;top:575.6px;line-height:12px;font-size:9px;color:#a94442;text-decoration:line-through;">744</div>
<div class="a t " style="left:422.3px;top:575.6px;line-height:12px;font-size:9px;color:#a94442;text-decoration:line-through;">Diversos</div>
<div class="a t " style="left:561.3px;top:575.6px;line-height:12px;font-size:9px;color:#a94442;text-decoration:line-through;">Pedro Paulo Felini</div>
<div class="a t " style="left:704.3px;top:575.6px;line-height:12px;font-size:9px;color:#a94442;text-decoration:line-through;">(Automático) Diversos - 744</div>
<div class="a t " style="left:954.3px;top:575.6px;line-height:12px;font-size:9px;color:#a94442;text-decoration:line-through;">Pix</div>
<div class="a t b" style="left:0px;top:575.6px;line-height:12px;font-size:9px;color:#a94442;text-decoration:line-through;left:auto;right:194.6px"><span style="color:#337ab7">275,00</span></div>
<div class="a t b" style="left:0px;top:575.6px;line-height:12px;font-size:9px;color:#a94442;text-decoration:line-through;left:auto;right:47.6px"><span style="color:#337ab7">56.683,05</span></div>
<div class="a " style="left:66px;top:595px;width:1237.4px;height:24px;background:#f9f9f9;border-bottom:1px solid #ddd"></div>
<div class="a " style="left:86px;top:595px;width:1px;height:24px;background:#ddd"></div>
<div class="a " style="left:111px;top:595px;width:1px;height:24px;background:#ddd"></div>
<div class="a " style="left:144px;top:595px;width:1px;height:24px;background:#ddd"></div>
<div class="a " style="left:179px;top:595px;width:1px;height:24px;background:#ddd"></div>
<div class="a " style="left:214px;top:595px;width:1px;height:24px;background:#ddd"></div>
<div class="a " style="left:254px;top:595px;width:1px;height:24px;background:#ddd"></div>
<div class="a " style="left:289px;top:595px;width:1px;height:24px;background:#ddd"></div>
<div class="a " style="left:338px;top:595px;width:1px;height:24px;background:#ddd"></div>
<div class="a " style="left:414px;top:595px;width:1px;height:24px;background:#ddd"></div>
<div class="a " style="left:553px;top:595px;width:1px;height:24px;background:#ddd"></div>
<div class="a " style="left:696px;top:595px;width:1px;height:24px;background:#ddd"></div>
<div class="a " style="left:946px;top:595px;width:1px;height:24px;background:#ddd"></div>
<div class="a " style="left:1084px;top:595px;width:1px;height:24px;background:#ddd"></div>
<div class="a " style="left:1156px;top:595px;width:1px;height:24px;background:#ddd"></div>
<div class="a " style="left:1230px;top:595px;width:1px;height:24px;background:#ddd"></div>
<div class="a " style="left:70.8px;top:600.1px;width:11.0px;height:11.0px;"><svg class="ic" viewBox="0 0 14 14" width="11" height="11"><rect x="5.300" y="1.200" width="2.800" height="2.900" rx=".5" fill="#8b1a1a"/><rect x="5.300" y="5.550" width="2.800" height="2.900" rx=".5" fill="#8b1a1a"/><rect x="5.300" y="9.900" width="2.800" height="2.900" rx=".5" fill="#8b1a1a"/></svg></div>
<div class="a " style="left:94px;top:601.0px;width:9px;height:9.0px;background:#fff;border:1px solid #767676;border-radius:1.500px"></div>
<div class="a " style="left:122.4px;top:599.5px;width:12.2px;height:12.2px;"><svg class="ic" viewBox="0 0 14 14" width="12.2" height="12.2"><circle cx="7" cy="7" r="6.200" fill="#a94442"/><path d="M7 3.500v7M3.500 7h7" stroke="#f9f9f9" stroke-width="2.100" fill="none"/></svg></div>
<div class="a " style="left:155.2px;top:598.6px;width:14.0px;height:14.0px;"><svg class="ic" viewBox="0 0 14 14" width="14" height="14"><g transform="translate(6.800 7) rotate(-45)"><path d="M2.300 -3.400V4a2.300 2.300 0 0 1-4.600 0V-4.500a1.550 1.550 0 0 1 3.100 0V3.100a.78.78 0 0 1-1.560 0V-3.400" stroke="#c2c2ca" stroke-width="1.050" fill="none" stroke-linecap="round"/></g></svg></div>
<div class="a " style="left:191.4px;top:599.7px;width:11.0px;height:11.0px;"><svg class="ic" viewBox="0 0 14 14" width="11" height="11"><circle cx="7" cy="7" r="5.900" fill="none" stroke="#c8c8c8" stroke-width="1.250"/><path d="M9.700 8.700a3.100 3.100 0 1 1 0-3.400" fill="none" stroke="#c8c8c8" stroke-width="1.250"/></svg></div>
<div class="a " style="left:228.6px;top:599.7px;width:11.0px;height:11.0px;"><svg class="ic" viewBox="0 0 14 14" width="11" height="11"><circle cx="7" cy="7" r="5.900" fill="none" stroke="#a94442" stroke-width="1.250"/><path d="M9.700 8.700a3.100 3.100 0 1 1 0-3.400" fill="none" stroke="#a94442" stroke-width="1.250"/></svg></div>
<div class="a t" style="left:255px;width:34px;top:599.6px;line-height:12px;text-align:center;font-size:9px;color:#a94442;text-decoration:line-through;">A</div>
<div class="a t " style="left:296.5px;top:599.6px;line-height:12px;font-size:9px;color:#a94442;text-decoration:line-through;">05/04/22</div>
<div class="a t " style="left:346.3px;top:599.6px;line-height:12px;font-size:9px;color:#a94442;text-decoration:line-through;">744</div>
<div class="a t " style="left:422.3px;top:599.6px;line-height:12px;font-size:9px;color:#a94442;text-decoration:line-through;">Diversos</div>
<div class="a t " style="left:561.3px;top:599.6px;line-height:12px;font-size:9px;color:#a94442;text-decoration:line-through;">Pedro Paulo Felini</div>
<div class="a t " style="left:704.3px;top:599.6px;line-height:12px;font-size:9px;color:#a94442;text-decoration:line-through;">(Automático) Diversos - 744</div>
<div class="a t " style="left:954.3px;top:599.6px;line-height:12px;font-size:9px;color:#a94442;text-decoration:line-through;">Pix</div>
<div class="a t b" style="left:0px;top:599.6px;line-height:12px;font-size:9px;color:#a94442;text-decoration:line-through;left:auto;right:194.6px"><span style="color:#337ab7">482,00</span></div>
<div class="a t b" style="left:0px;top:599.6px;line-height:12px;font-size:9px;color:#a94442;text-decoration:line-through;left:auto;right:47.6px"><span style="color:#337ab7">56.683,05</span></div>
<div class="a " style="left:66px;top:619px;width:1237.4px;height:24px;background:#fff;border-bottom:1px solid #ddd"></div>
<div class="a " style="left:86px;top:619px;width:1px;height:24px;background:#ddd"></div>
<div class="a " style="left:111px;top:619px;width:1px;height:24px;background:#ddd"></div>
<div class="a " style="left:144px;top:619px;width:1px;height:24px;background:#ddd"></div>
<div class="a " style="left:179px;top:619px;width:1px;height:24px;background:#ddd"></div>
<div class="a " style="left:214px;top:619px;width:1px;height:24px;background:#ddd"></div>
<div class="a " style="left:254px;top:619px;width:1px;height:24px;background:#ddd"></div>
<div class="a " style="left:289px;top:619px;width:1px;height:24px;background:#ddd"></div>
<div class="a " style="left:338px;top:619px;width:1px;height:24px;background:#ddd"></div>
<div class="a " style="left:414px;top:619px;width:1px;height:24px;background:#ddd"></div>
<div class="a " style="left:553px;top:619px;width:1px;height:24px;background:#ddd"></div>
<div class="a " style="left:696px;top:619px;width:1px;height:24px;background:#ddd"></div>
<div class="a " style="left:946px;top:619px;width:1px;height:24px;background:#ddd"></div>
<div class="a " style="left:1084px;top:619px;width:1px;height:24px;background:#ddd"></div>
<div class="a " style="left:1156px;top:619px;width:1px;height:24px;background:#ddd"></div>
<div class="a " style="left:1230px;top:619px;width:1px;height:24px;background:#ddd"></div>
<div class="a " style="left:70.8px;top:624.1px;width:11.0px;height:11.0px;"><svg class="ic" viewBox="0 0 14 14" width="11" height="11"><rect x="5.300" y="1.200" width="2.800" height="2.900" rx=".5" fill="#8b1a1a"/><rect x="5.300" y="5.550" width="2.800" height="2.900" rx=".5" fill="#8b1a1a"/><rect x="5.300" y="9.900" width="2.800" height="2.900" rx=".5" fill="#8b1a1a"/></svg></div>
<div class="a " style="left:94px;top:625.0px;width:9px;height:9.0px;background:#fff;border:1px solid #767676;border-radius:1.500px"></div>
<div class="a " style="left:122.4px;top:623.5px;width:12.2px;height:12.2px;"><svg class="ic" viewBox="0 0 14 14" width="12.2" height="12.2"><circle cx="7" cy="7" r="6.200" fill="#a94442"/><path d="M7 3.500v7M3.500 7h7" stroke="#fff" stroke-width="2.100" fill="none"/></svg></div>
<div class="a " style="left:155.2px;top:622.6px;width:14.0px;height:14.0px;"><svg class="ic" viewBox="0 0 14 14" width="14" height="14"><g transform="translate(6.800 7) rotate(-45)"><path d="M2.300 -3.400V4a2.300 2.300 0 0 1-4.600 0V-4.500a1.550 1.550 0 0 1 3.100 0V3.100a.78.78 0 0 1-1.560 0V-3.400" stroke="#c2c2ca" stroke-width="1.050" fill="none" stroke-linecap="round"/></g></svg></div>
<div class="a " style="left:191.4px;top:623.7px;width:11.0px;height:11.0px;"><svg class="ic" viewBox="0 0 14 14" width="11" height="11"><circle cx="7" cy="7" r="5.900" fill="none" stroke="#c8c8c8" stroke-width="1.250"/><path d="M9.700 8.700a3.100 3.100 0 1 1 0-3.400" fill="none" stroke="#c8c8c8" stroke-width="1.250"/></svg></div>
<div class="a " style="left:228.6px;top:623.7px;width:11.0px;height:11.0px;"><svg class="ic" viewBox="0 0 14 14" width="11" height="11"><circle cx="7" cy="7" r="5.900" fill="none" stroke="#a94442" stroke-width="1.250"/><path d="M9.700 8.700a3.100 3.100 0 1 1 0-3.400" fill="none" stroke="#a94442" stroke-width="1.250"/></svg></div>
<div class="a t" style="left:255px;width:34px;top:623.6px;line-height:12px;text-align:center;font-size:9px;color:#a94442;text-decoration:line-through;">A</div>
<div class="a t " style="left:296.5px;top:623.6px;line-height:12px;font-size:9px;color:#a94442;text-decoration:line-through;">05/04/22</div>
<div class="a t " style="left:346.3px;top:623.6px;line-height:12px;font-size:9px;color:#a94442;text-decoration:line-through;">744</div>
<div class="a t " style="left:422.3px;top:623.6px;line-height:12px;font-size:9px;color:#a94442;text-decoration:line-through;">Diversos</div>
<div class="a t " style="left:561.3px;top:623.6px;line-height:12px;font-size:9px;color:#a94442;text-decoration:line-through;">Pedro Paulo Felini</div>
<div class="a t " style="left:704.3px;top:623.6px;line-height:12px;font-size:9px;color:#a94442;text-decoration:line-through;">(Automático) Diversos - 744</div>
<div class="a t " style="left:954.3px;top:623.6px;line-height:12px;font-size:9px;color:#a94442;text-decoration:line-through;">Pix</div>
<div class="a t b" style="left:0px;top:623.6px;line-height:12px;font-size:9px;color:#a94442;text-decoration:line-through;left:auto;right:194.6px"><span style="color:#337ab7">457,00</span></div>
<div class="a t b" style="left:0px;top:623.6px;line-height:12px;font-size:9px;color:#a94442;text-decoration:line-through;left:auto;right:47.6px"><span style="color:#337ab7">56.683,05</span></div>
<div class="a " style="left:66px;top:643px;width:1237.4px;height:24px;background:#f9f9f9;border-bottom:1px solid #ddd"></div>
<div class="a " style="left:86px;top:643px;width:1px;height:24px;background:#ddd"></div>
<div class="a " style="left:111px;top:643px;width:1px;height:24px;background:#ddd"></div>
<div class="a " style="left:144px;top:643px;width:1px;height:24px;background:#ddd"></div>
<div class="a " style="left:179px;top:643px;width:1px;height:24px;background:#ddd"></div>
<div class="a " style="left:214px;top:643px;width:1px;height:24px;background:#ddd"></div>
<div class="a " style="left:254px;top:643px;width:1px;height:24px;background:#ddd"></div>
<div class="a " style="left:289px;top:643px;width:1px;height:24px;background:#ddd"></div>
<div class="a " style="left:338px;top:643px;width:1px;height:24px;background:#ddd"></div>
<div class="a " style="left:414px;top:643px;width:1px;height:24px;background:#ddd"></div>
<div class="a " style="left:553px;top:643px;width:1px;height:24px;background:#ddd"></div>
<div class="a " style="left:696px;top:643px;width:1px;height:24px;background:#ddd"></div>
<div class="a " style="left:946px;top:643px;width:1px;height:24px;background:#ddd"></div>
<div class="a " style="left:1084px;top:643px;width:1px;height:24px;background:#ddd"></div>
<div class="a " style="left:1156px;top:643px;width:1px;height:24px;background:#ddd"></div>
<div class="a " style="left:1230px;top:643px;width:1px;height:24px;background:#ddd"></div>
<div class="a " style="left:70.8px;top:648.1px;width:11.0px;height:11.0px;"><svg class="ic" viewBox="0 0 14 14" width="11" height="11"><rect x="5.300" y="1.200" width="2.800" height="2.900" rx=".5" fill="#111"/><rect x="5.300" y="5.550" width="2.800" height="2.900" rx=".5" fill="#111"/><rect x="5.300" y="9.900" width="2.800" height="2.900" rx=".5" fill="#111"/></svg></div>
<div class="a " style="left:94px;top:649.0px;width:9px;height:9.0px;background:#fff;border:1px solid #767676;border-radius:1.500px"></div>
<div class="a " style="left:122.4px;top:647.5px;width:12.2px;height:12.2px;"><svg class="ic" viewBox="0 0 14 14" width="12.2" height="12.2"><circle cx="7" cy="7" r="6.200" fill="#337ab7"/><path d="M7 3.500v7M3.500 7h7" stroke="#f9f9f9" stroke-width="2.100" fill="none"/></svg></div>
<div class="a " style="left:155.2px;top:646.6px;width:14.0px;height:14.0px;"><svg class="ic" viewBox="0 0 14 14" width="14" height="14"><g transform="translate(6.800 7) rotate(-45)"><path d="M2.300 -3.400V4a2.300 2.300 0 0 1-4.600 0V-4.500a1.550 1.550 0 0 1 3.100 0V3.100a.78.78 0 0 1-1.560 0V-3.400" stroke="#c2c2ca" stroke-width="1.050" fill="none" stroke-linecap="round"/></g></svg></div>
<div class="a " style="left:191.4px;top:647.7px;width:11.0px;height:11.0px;"><svg class="ic" viewBox="0 0 14 14" width="11" height="11"><circle cx="7" cy="7" r="5.900" fill="none" stroke="#9932cc" stroke-width="1.250"/><path d="M9.700 8.700a3.100 3.100 0 1 1 0-3.400" fill="none" stroke="#9932cc" stroke-width="1.250"/></svg></div>
<div class="a " style="left:228.6px;top:647.7px;width:11.0px;height:11.0px;"><svg class="ic" viewBox="0 0 14 14" width="11" height="11"><circle cx="7" cy="7" r="5.900" fill="none" stroke="#3fab3f" stroke-width="1.250"/><path d="M9.700 8.700a3.100 3.100 0 1 1 0-3.400" fill="none" stroke="#3fab3f" stroke-width="1.250"/></svg></div>
<div class="a t" style="left:255px;width:34px;top:647.6px;line-height:12px;text-align:center;font-size:9px;color:#337ab7;">A</div>
<div class="a t " style="left:296.5px;top:647.6px;line-height:12px;font-size:9px;color:#337ab7;">05/04/22</div>
<div class="a t " style="left:346.3px;top:647.6px;line-height:12px;font-size:9px;color:#337ab7;">741</div>
<div class="a t " style="left:422.3px;top:647.6px;line-height:12px;font-size:9px;color:#337ab7;">1.1.2 - Combustíveis</div>
<div class="a t " style="left:561.3px;top:647.6px;line-height:12px;font-size:9px;color:#337ab7;">Lúcio Mauro</div>
<div class="a t " style="left:704.3px;top:647.6px;line-height:12px;font-size:9px;color:#337ab7;">(Automático) Consumo - 741</div>
<div class="a t " style="left:954.3px;top:647.6px;line-height:12px;font-size:9px;color:#337ab7;">Pix</div>
<div class="a t b" style="left:0px;top:647.6px;line-height:12px;font-size:9px;color:#337ab7;left:auto;right:194.6px"><span style="color:#337ab7">275,00</span></div>
<div class="a t b" style="left:0px;top:647.6px;line-height:12px;font-size:9px;color:#337ab7;left:auto;right:47.6px"><span style="color:#337ab7">56.958,05</span></div>
<div class="a " style="left:66px;top:667px;width:1237.4px;height:24px;background:#fff;border-bottom:1px solid #ddd"></div>
<div class="a " style="left:86px;top:667px;width:1px;height:24px;background:#ddd"></div>
<div class="a " style="left:111px;top:667px;width:1px;height:24px;background:#ddd"></div>
<div class="a " style="left:144px;top:667px;width:1px;height:24px;background:#ddd"></div>
<div class="a " style="left:179px;top:667px;width:1px;height:24px;background:#ddd"></div>
<div class="a " style="left:214px;top:667px;width:1px;height:24px;background:#ddd"></div>
<div class="a " style="left:254px;top:667px;width:1px;height:24px;background:#ddd"></div>
<div class="a " style="left:289px;top:667px;width:1px;height:24px;background:#ddd"></div>
<div class="a " style="left:338px;top:667px;width:1px;height:24px;background:#ddd"></div>
<div class="a " style="left:414px;top:667px;width:1px;height:24px;background:#ddd"></div>
<div class="a " style="left:553px;top:667px;width:1px;height:24px;background:#ddd"></div>
<div class="a " style="left:696px;top:667px;width:1px;height:24px;background:#ddd"></div>
<div class="a " style="left:946px;top:667px;width:1px;height:24px;background:#ddd"></div>
<div class="a " style="left:1084px;top:667px;width:1px;height:24px;background:#ddd"></div>
<div class="a " style="left:1156px;top:667px;width:1px;height:24px;background:#ddd"></div>
<div class="a " style="left:1230px;top:667px;width:1px;height:24px;background:#ddd"></div>
<div class="a " style="left:70.8px;top:672.1px;width:11.0px;height:11.0px;"><svg class="ic" viewBox="0 0 14 14" width="11" height="11"><rect x="5.300" y="1.200" width="2.800" height="2.900" rx=".5" fill="#111"/><rect x="5.300" y="5.550" width="2.800" height="2.900" rx=".5" fill="#111"/><rect x="5.300" y="9.900" width="2.800" height="2.900" rx=".5" fill="#111"/></svg></div>
<div class="a " style="left:94px;top:673.0px;width:9px;height:9.0px;background:#fff;border:1px solid #767676;border-radius:1.500px"></div>
<div class="a " style="left:122.4px;top:671.5px;width:12.2px;height:12.2px;"><svg class="ic" viewBox="0 0 14 14" width="12.2" height="12.2"><circle cx="7" cy="7" r="6.200" fill="#337ab7"/><path d="M7 3.500v7M3.500 7h7" stroke="#fff" stroke-width="2.100" fill="none"/></svg></div>
<div class="a " style="left:155.2px;top:670.6px;width:14.0px;height:14.0px;"><svg class="ic" viewBox="0 0 14 14" width="14" height="14"><g transform="translate(6.800 7) rotate(-45)"><path d="M2.300 -3.400V4a2.300 2.300 0 0 1-4.600 0V-4.500a1.550 1.550 0 0 1 3.100 0V3.100a.78.78 0 0 1-1.560 0V-3.400" stroke="#c2c2ca" stroke-width="1.050" fill="none" stroke-linecap="round"/></g></svg></div>
<div class="a " style="left:191.4px;top:671.7px;width:11.0px;height:11.0px;"><svg class="ic" viewBox="0 0 14 14" width="11" height="11"><circle cx="7" cy="7" r="5.900" fill="none" stroke="#9932cc" stroke-width="1.250"/><path d="M9.700 8.700a3.100 3.100 0 1 1 0-3.400" fill="none" stroke="#9932cc" stroke-width="1.250"/></svg></div>
<div class="a " style="left:228.6px;top:671.7px;width:11.0px;height:11.0px;"><svg class="ic" viewBox="0 0 14 14" width="11" height="11"><circle cx="7" cy="7" r="5.900" fill="none" stroke="#3fab3f" stroke-width="1.250"/><path d="M9.700 8.700a3.100 3.100 0 1 1 0-3.400" fill="none" stroke="#3fab3f" stroke-width="1.250"/></svg></div>
<div class="a t" style="left:255px;width:34px;top:671.6px;line-height:12px;text-align:center;font-size:9px;color:#337ab7;">A</div>
<div class="a t " style="left:296.5px;top:671.6px;line-height:12px;font-size:9px;color:#337ab7;">05/04/22</div>
<div class="a t " style="left:346.3px;top:671.6px;line-height:12px;font-size:9px;color:#337ab7;">739</div>
<div class="a t " style="left:422.3px;top:671.6px;line-height:12px;font-size:9px;color:#337ab7;">1.2.2.1 - Juros e Multa</div>
<div class="a t " style="left:561.3px;top:671.6px;line-height:12px;font-size:9px;color:#337ab7;">Verônica</div>
<div class="a t " style="left:704.3px;top:671.6px;line-height:12px;font-size:9px;color:#337ab7;">(Automático) Juros/Multa Consumo - 739</div>
<div class="a t " style="left:954.3px;top:671.6px;line-height:12px;font-size:9px;color:#337ab7;">Pix</div>
<div class="a t b" style="left:0px;top:671.6px;line-height:12px;font-size:9px;color:#337ab7;left:auto;right:194.6px"><span style="color:#337ab7">0,99</span></div>
<div class="a t b" style="left:0px;top:671.6px;line-height:12px;font-size:9px;color:#337ab7;left:auto;right:47.6px"><span style="color:#337ab7">56.959,04</span></div>
<!-- footer -->
<div class="a " style="left:47px;top:689px;width:1295px;height:37px;background:#fff"></div>
<div class="a " style="left:65px;top:689px;width:1px;height:0px;background:#ddd"></div>
<div class="a " style="left:71.8px;top:693px;width:26.0px;height:24px;"><svg class="ic" viewBox="0 0 26 24" width="26" height="24">
<g fill="none" stroke="#647f8d" stroke-width="1.500">
<path d="M0 2.600q3.250-3 6.500 0t6.500 0 6.500 0 6.500 0"/>
<path d="M0 4.900q3.250-3 6.500 0t6.500 0 6.500 0 6.500 0"/>
<path d="M0 7.200q3.250-3 6.500 0t6.500 0 6.500 0 6.500 0"/>
<path d="M0 9.500q3.250-3 6.500 0t6.500 0 6.500 0 6.500 0"/>
</g>
<text x="1.600" y="18.200" font-family="Liberation Sans,Arial,sans-serif" font-weight="bold" font-size="5.900" letter-spacing="1.900" fill="#557280" stroke="#557280" stroke-width=".4">EASY</text>
<text x="1.600" y="23.600" font-family="Liberation Sans,Arial,sans-serif" font-weight="bold" font-size="3.900" letter-spacing="1.320" fill="#557280" stroke="#557280" stroke-width=".3">MARINE</text>
</svg></div>
<div class="a t " style="left:227.7px;top:702.4px;line-height:12px;font-size:8px;color:#5c6873;letter-spacing:.22px;word-spacing:1px">Copyright ©</div>
<div class="a t " style="left:276.7px;top:702.4px;line-height:12px;font-size:8px;color:#222;letter-spacing:-.12px;-webkit-text-stroke:.15px #222">EASYMARINE</div>
<div class="a t " style="left:331.4px;top:702.4px;line-height:12px;font-size:8px;color:#5c6873;letter-spacing:.3px">2022</div>
</div></div>
</body>
</html>
